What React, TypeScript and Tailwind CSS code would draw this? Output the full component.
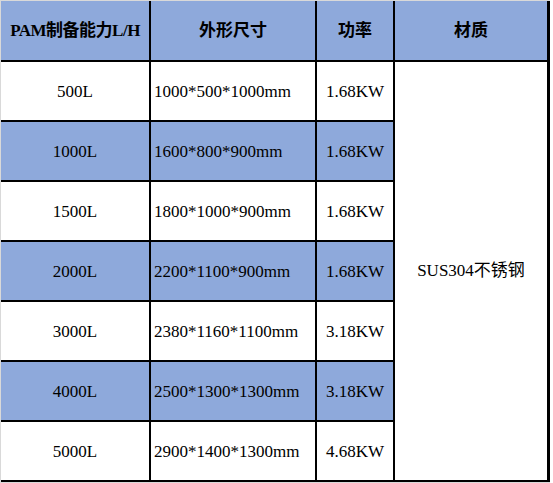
import React from "react";

const rows = [
  ["500L", "1000*500*1000mm", "1.68KW"],
  ["1000L", "1600*800*900mm", "1.68KW"],
  ["1500L", "1800*1000*900mm", "1.68KW"],
  ["2000L", "2200*1100*900mm", "1.68KW"],
  ["3000L", "2380*1160*1100mm", "3.18KW"],
  ["4000L", "2500*1300*1300mm", "3.18KW"],
  ["5000L", "2900*1400*1300mm", "4.68KW"],
];

export default function App() {
  const font = { fontFamily: '"Liberation Serif", "Noto Sans CJK SC", serif' };
  return (
    <div className="w-[553px] h-[483px] bg-white overflow-hidden" style={font}>
      <div className="w-[550px] border-t border-l border-r border-b border-[#d9d9d9]">
        <div className="grid grid-cols-[148px_164px_76px_152px] grid-rows-[59px_repeat(7,58px)] gap-[2px] bg-black pr-[2px] pb-[2px] w-[549px] text-[17px] text-black">
          <div className="bg-[#8EA9DB] flex items-center justify-center font-bold tracking-[-0.5px]">PAM制备能力L/H</div>
          <div className="bg-[#8EA9DB] flex items-center justify-center font-bold">外形尺寸</div>
          <div className="bg-[#8EA9DB] flex items-center justify-center font-bold">功率</div>
          <div className="bg-[#8EA9DB] flex items-center justify-center font-bold">材质</div>
          {rows.map((r, i) => {
            const bg = i % 2 === 1 ? "bg-[#8EA9DB]" : "bg-white";
            return (
              <React.Fragment key={i}>
                <div className={`${bg} flex items-center justify-center pt-[2px]`}>{r[0]}</div>
                <div className={`${bg} flex items-center pl-[3px] pt-[2px]`}>{r[1]}</div>
                <div className={`${bg} flex items-center justify-center pt-[2px]`}>{r[2]}</div>
                {i === 0 && (
                  <div className="bg-white row-span-7 flex items-center justify-center">SUS304不锈钢</div>
                )}
              </React.Fragment>
            );
          })}
        </div>
      </div>
    </div>
  );
}
